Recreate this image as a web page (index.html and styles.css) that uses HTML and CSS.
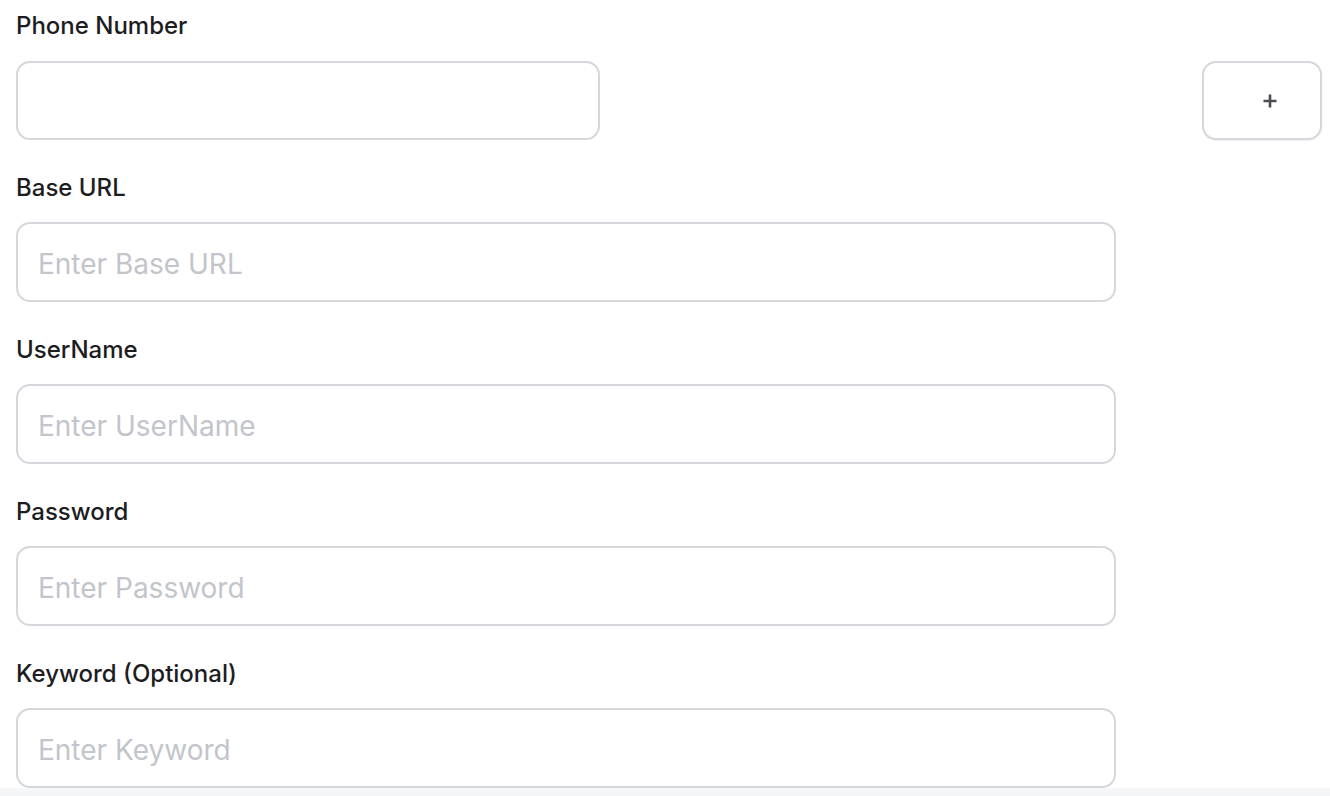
FILE: index.html
```html
<!DOCTYPE html>
<html lang="en">
<head>
<meta charset="utf-8">
<title>Settings form</title>
<link rel="stylesheet" href="styles.css">
</head>
<body>
<div class="page">
  <form class="form">
    <div class="field">
      <label class="label">Phone Number</label>
      <div class="phone-row">
        <input class="input input-phone" type="text">
        <button class="add-btn" type="button" aria-label="Add">
          <svg width="14" height="14" viewBox="0 0 14 14"><path d="M7 0.5v13M0.5 7h13" stroke="#4a4c51" stroke-width="2.6" fill="none"/></svg>
        </button>
      </div>
    </div>
    <div class="field">
      <label class="label">Base URL</label>
      <input class="input" type="text" placeholder="Enter Base URL">
    </div>
    <div class="field">
      <label class="label">UserName</label>
      <input class="input" type="text" placeholder="Enter UserName">
    </div>
    <div class="field">
      <label class="label">Password</label>
      <input class="input" type="text" placeholder="Enter Password">
    </div>
    <div class="field">
      <label class="label">Keyword (Optional)</label>
      <input class="input" type="text" placeholder="Enter Keyword">
    </div>
  </form>
  <div class="footer-strip"></div>
</div>
</body>
</html>
```
FILE: styles.css
```css
* { box-sizing: border-box; }
html, body { margin: 0; padding: 0; background: #ffffff; }
body {
  font-family: Inter, "Noto Sans", "Liberation Sans", sans-serif;
  color: #1d1d1f;
  overflow: hidden;
}
.page {
  width: 1330px;
  height: 796px;
  display: flex;
  flex-direction: column;
}
.form {
  display: flex;
  flex-direction: column;
  gap: 30px;
  padding: 8px 8px 0 16px;
}
.field {
  display: flex;
  flex-direction: column;
}
.label {
  font-size: 24px;
  font-weight: 500;
  line-height: 36px;
  margin-bottom: 16px;
  color: #1d1d1f;
}
.field:first-child .label { margin-bottom: 17px; }
.input {
  width: 1100px;
  height: 80px;
  border: 2px solid #d5d7dc;
  border-radius: 14px;
  padding: 3px 20px 0;
  font-family: inherit;
  font-size: 28px;
  color: #1d1d1f;
  background: #fff;
  outline: none;
}
.input::placeholder { color: #c2c5cb; }
.phone-row {
  display: flex;
  justify-content: space-between;
  align-items: center;
}
.input-phone { width: 584px; height: 79px; }
.add-btn {
  width: 120px;
  height: 79px;
  border: 2px solid #d5d7dc;
  border-radius: 14px;
  background: #fff;
  box-shadow: 0 1px 2px rgba(0,0,0,0.06);
  display: flex;
  align-items: center;
  justify-content: center;
  padding: 0 0 0 16px;
  cursor: pointer;
}
.add-btn svg { display: block; }
.footer-strip {
  margin-top: auto;
  height: 8px;
  background: linear-gradient(#f7f8f9, #f2f3f5);
}
```
